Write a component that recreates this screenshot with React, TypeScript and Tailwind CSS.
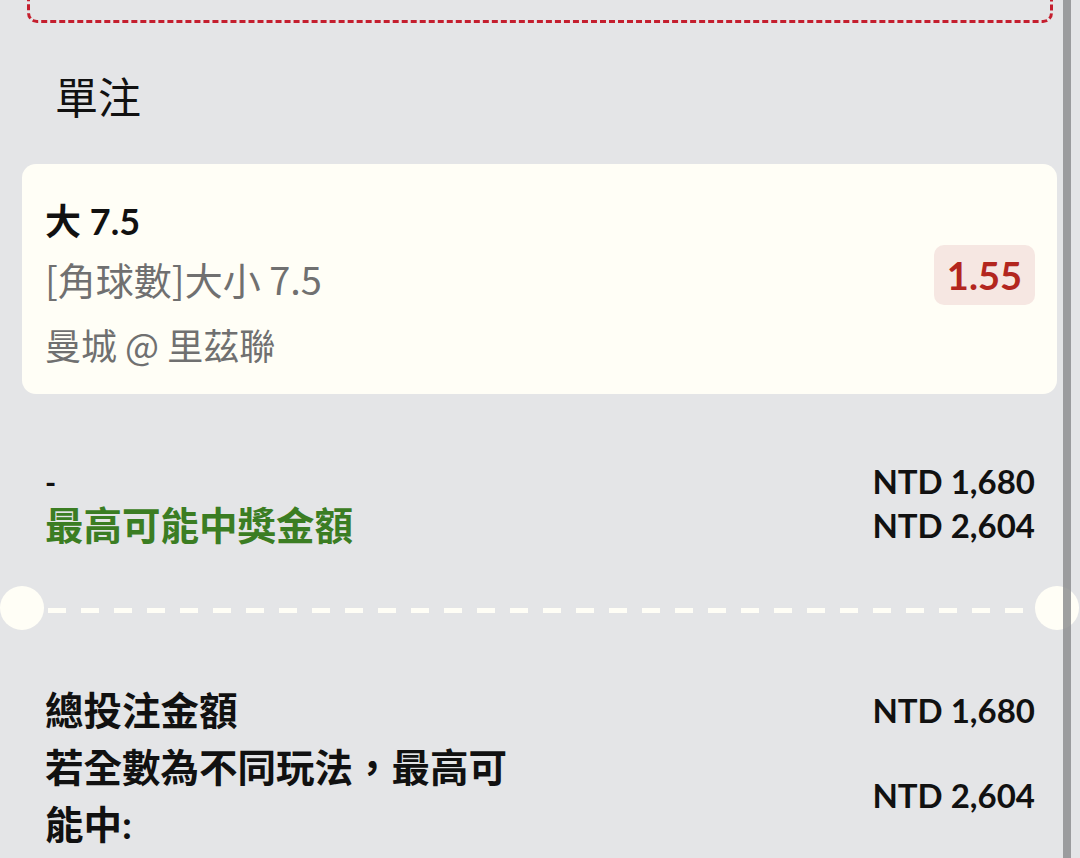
const FONT = "font-['Lato','Noto_Sans_CJK_TC',sans-serif]";

function Amount({ value, className = '' }: { value: string; className?: string }) {
  return (
    <span className={`text-[33px] font-bold text-[#111] whitespace-nowrap ${className}`}>{value}</span>
  );
}

export default function App() {
  return (
    <div className={`relative h-[858px] w-[1080px] overflow-hidden bg-[#e4e5e7] ${FONT}`}>
      {/* tail of the box above, scrolled mostly out of view */}
      <div className="mx-[27px] mt-[-40px] h-[63px] rounded-[10px] border-[3px] border-dashed border-[#c41e2e]" />

      <h2 className="mt-[48px] pl-[55px] font-['Noto_Sans_CJK_TC',sans-serif] text-[43px] leading-[48px] font-normal text-[#111]">單注</h2>

      {/* selection card */}
      <div className="ml-[22px] mr-[23px] mt-[45px] flex h-[230px] justify-between rounded-[14px] bg-[#fffef6] pl-[23px] pr-[22px] pt-[37px]">
        <div className="flex flex-col">
          <p className="text-[36px] leading-[40px] font-bold text-[#111]">大 7.5</p>
          <p className="mt-[16px] font-['Noto_Sans_CJK_TC',sans-serif] text-[38px] leading-[44px] text-[#707070]">[角球數]大小 7.5</p>
          <p className="mt-[21px] font-['Noto_Sans_CJK_TC',sans-serif] text-[36px] leading-[44px] text-[#707070]">曼城 @ 里茲聯</p>
        </div>
        <span className="mt-[44px] flex h-[60px] items-center self-start rounded-[10px] bg-[#f6e7e2] px-[13px] text-[38px] font-bold text-[#b3261e]">
          1.55
        </span>
      </div>

      {/* single bet totals */}
      <div className="mt-[66px] pl-[45px] pr-[45px]">
        <div className="flex h-[44px] items-center justify-between">
          <span className="text-[30px] font-bold text-[#111]">-</span>
          <Amount value="NTD 1,680" />
        </div>
        <div className="flex h-[44px] items-center justify-between">
          <span className="text-[38.5px] font-bold text-[#3b7d23]">最高可能中獎金額</span>
          <Amount value="NTD 2,604" />
        </div>
      </div>

      {/* ticket perforation */}
      <div className="mt-[38px] flex h-[44px] items-center pr-[1px]">
        <div className="h-[44px] w-[44px] shrink-0 rounded-full bg-[#fffef6]" />
        <div className="mx-[4px] mt-[4px] h-[5px] flex-1 bg-[repeating-linear-gradient(to_right,#fffef6_0_18px,transparent_18px_33px)]" />
        <div className="h-[44px] w-[44px] shrink-0 rounded-full bg-[#fffef6]" />
      </div>

      {/* overall totals */}
      <div className="mt-[52px] pl-[45px] pr-[45px]">
        <div className="flex h-[57px] items-center justify-between">
          <span className="text-[38.5px] leading-[57px] font-bold text-[#111]">總投注金額</span>
          <Amount value="NTD 1,680" />
        </div>
        <div className="flex items-center justify-between">
          <p className="w-[490px] text-[38.5px] leading-[57px] font-bold text-[#111]">若全數為不同玩法，最高可能中:</p>
          <Amount value="NTD 2,604" />
        </div>
      </div>

      <div className="absolute bottom-0 left-[1063px] top-0 w-[8px] bg-[#8e8f91] opacity-85" />
    </div>
  );
}
